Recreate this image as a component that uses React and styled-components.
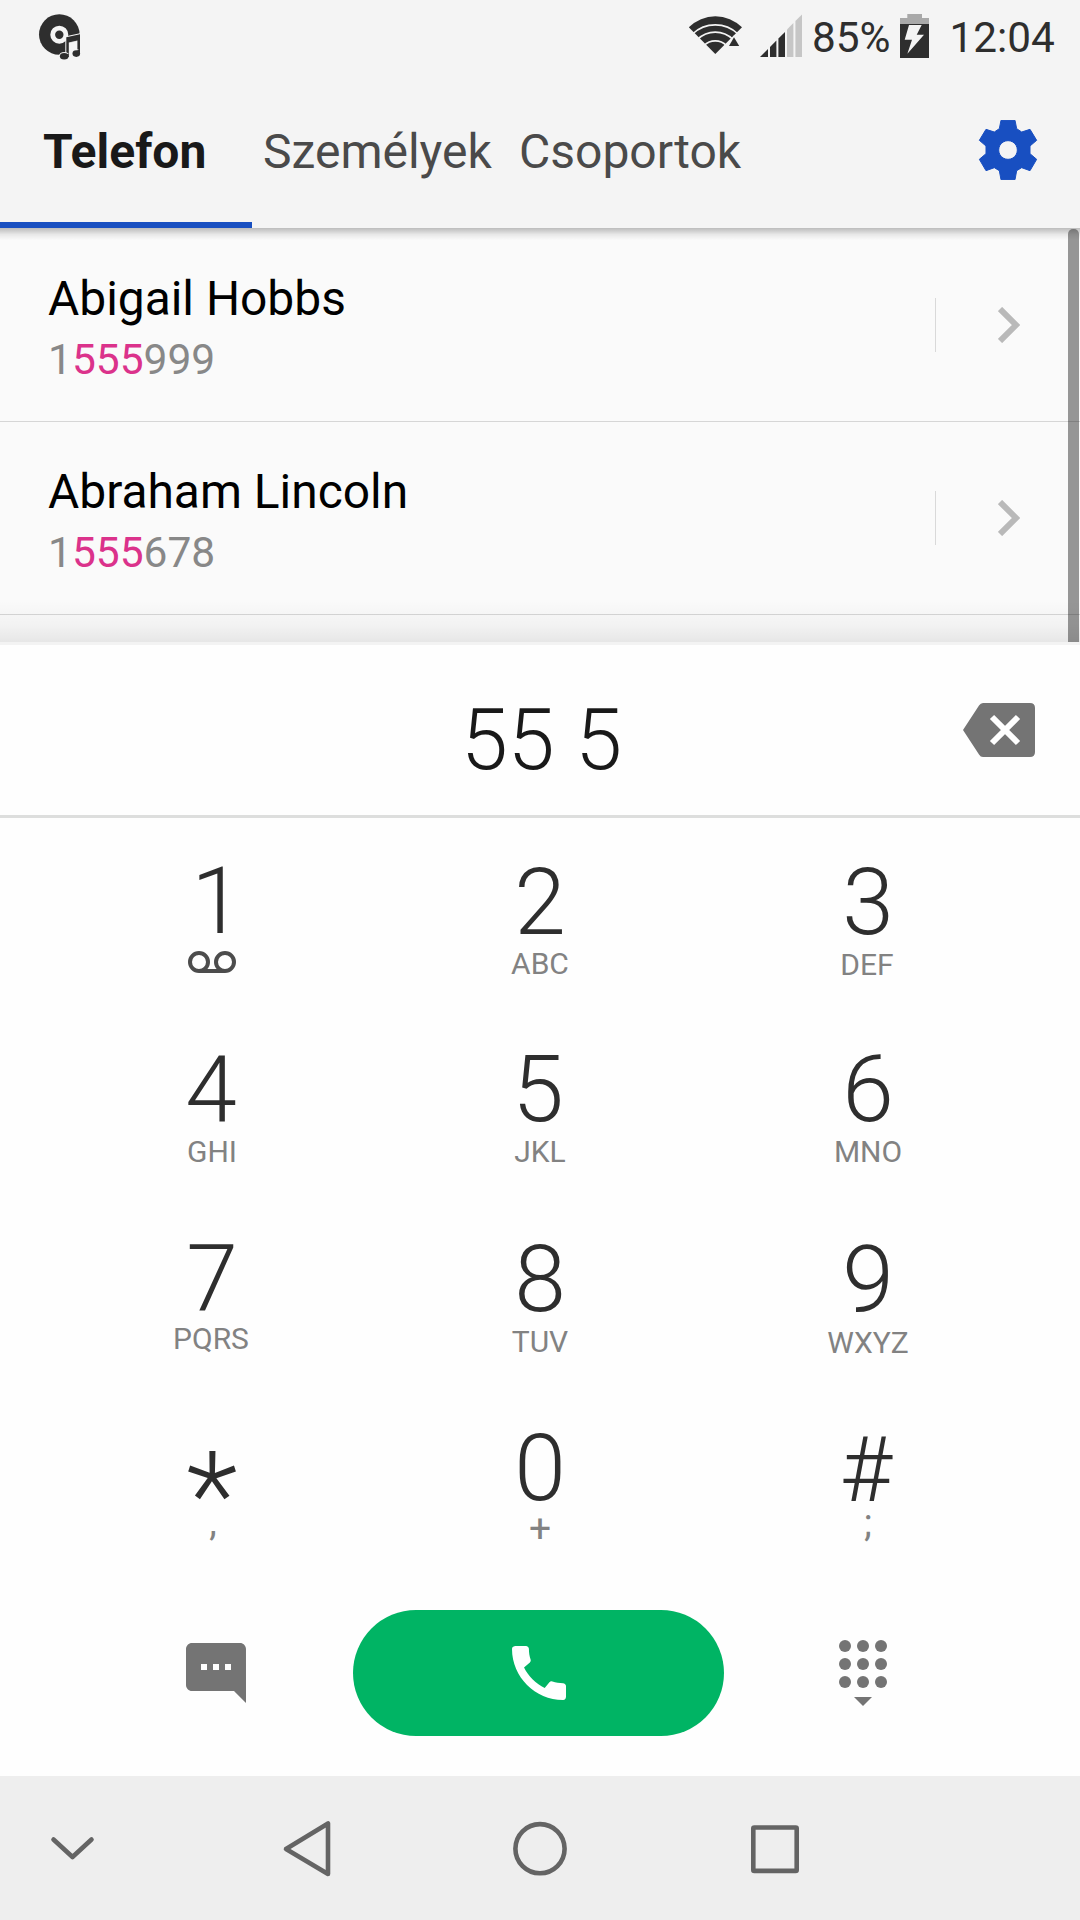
import React from 'react'
import styled, { createGlobalStyle } from 'styled-components'
import { MdCall, MdTextsms } from 'react-icons/md'

const contacts = [
  { name: 'Abigail Hobbs', before: '1', match: '555', after: '999' },
  { name: 'Abraham Lincoln', before: '1', match: '555', after: '678' },
]

// drop / nudge move the digit, lift / slide move the letters under it
const keys = [
  { digit: '1', voicemail: true, drop: 1, nudge: 5 },
  { digit: '2', label: 'ABC', drop: 2 },
  { digit: '3', label: 'DEF', drop: 2, lift: 1, slide: -1 },
  { digit: '4', label: 'GHI', drop: 1, nudge: -1, lift: -1 },
  { digit: '5', label: 'JKL', drop: 0, nudge: -2, lift: -1 },
  { digit: '6', label: 'MNO', drop: 0, lift: -1 },
  { digit: '7', label: 'PQRS', drop: 0, lift: -3, slide: -1 },
  { digit: '8', label: 'TUV', drop: 1 },
  { digit: '9', label: 'WXYZ', drop: 2, lift: 1 },
  { digit: '*', label: ',', symbol: 38, size: 120, drop: 28, lift: -9, slide: 1 },
  { digit: '0', label: '+', symbol: 39, drop: 1, lift: -2 },
  { digit: '#', label: ';', symbol: 38, size: 90, drop: 3, nudge: -2, lift: -8 },
]

function StatusIcons() {
  return (
    <>
      <Wifi viewBox="686 0 60 75">
        <path d="M715.3 54 L688.8 27.3 A37.7 37.7 0 0 1 742 27.3 Z" fill="#2e2e2e" />
        <g fill="none" stroke="#f4f4f4" strokeWidth="1.6">
          <path d="M692.5 34 A33 33 0 0 1 738 34" />
          <path d="M697.5 39.5 A25 25 0 0 1 733 39.5" />
          <path d="M704 45.5 A16 16 0 0 1 726.5 45.5" />
        </g>
        <path d="M734 37.3 L739.2 46 H729 Z" fill="#2e2e2e" stroke="#f4f4f4" strokeWidth="2" paintOrder="stroke" />
      </Wifi>
      <Signal viewBox="760 0 42 75">
        <g fill="#2e2e2e">
          <path d="M760 57 L768 49 V57 Z" />
          <path d="M770 57 V47 L776.4 40.5 V57 Z" />
          <path d="M778.4 57 V38.5 L785 32 V57 Z" />
        </g>
        <g fill="#c6c6c6">
          <path d="M787 57 V29.5 L793.4 23 V57 Z" />
          <path d="M795.4 57 V21 L802 14.5 V57 Z" />
        </g>
      </Signal>
    </>
  )
}

function App() {
  return (
    <Phone>
      <GlobalStyle />
      <StatusBar>
        <Disc viewBox="38 0 44 75">
          <circle cx="59.3" cy="34.5" r="20.3" fill="#2e2e2e" />
          <circle cx="59.3" cy="34.7" r="6.6" fill="none" stroke="#f4f4f4" strokeWidth="4.8" />
          <path d="M68 43 L77 41 V54 H68 Z" fill="#f4f4f4" />
          <g fill="#2e2e2e" stroke="#f4f4f4" strokeWidth="2" paintOrder="stroke">
            <path d="M66.3 37.3 L80 34.3 V54 H77.4 V40.4 L68.8 42.4 V56.5 H66.3 Z" />
            <ellipse cx="64.2" cy="56.2" rx="4.3" ry="3.3" />
            <ellipse cx="76.3" cy="53.6" rx="3.8" ry="3.3" />
          </g>
          <path d="M66.3 54 H68.8 V57 H66.3 Z M77.4 50 H80 V54 H77.4 Z" fill="#2e2e2e" />
        </Disc>
        <StatusIcons />
        <StatusText $left={10}>85%</StatusText>
        <Battery viewBox="900 0 29 75">
          <path d="M907.3 14 H922 V18 H929 V24.5 H900 V18 H907.3 Z" fill="#a9a9a9" />
          <path d="M900 24 H929 V58 H900 Z" fill="#2e2e2e" />
          <path d="M909 25 H921.7 L916.7 34.7 H924 L907.4 53.7 L912 39.7 H904.7 Z" fill="#f4f4f4" />
        </Battery>
        <StatusText $left={21}>12:04</StatusText>
      </StatusBar>

      <TabBar>
        <Tab $active $width={252} $inset={43}>Telefon</Tab>
        <Tab $width={265} $inset={11}>Személyek</Tab>
        <Tab $width={240} $inset={2}>Csoportok</Tab>
        <Gear viewBox="954 420 180 180">
          <path
            transform="translate(0 60)"
            fillRule="evenodd"
            strokeLinejoin="round"
            strokeWidth="3"
            d="M1023 361 H1065 L1070 386 L1085 396 L1110 388 L1130 421 L1110 438 V461 L1130 478 L1110 512 L1085 503 L1070 512 L1065 539 H1023 L1018 512 L1003 503 L978 512 L958 478 L978 461 V438 L958 421 L978 388 L1003 396 L1018 386 Z M1044 422 a28 28 0 1 0 0.1 0 Z"
          />
        </Gear>
      </TabBar>

      <ContactList>
        {contacts.map((contact) => (
          <ContactRow key={contact.name}>
            <ContactText>
              <ContactName>{contact.name}</ContactName>
              <ContactNumber>
                {contact.before}
                <Match>{contact.match}</Match>
                {contact.after}
              </ContactNumber>
            </ContactText>
            <RowDivider />
            <Chevron viewBox="0 0 22 36">
              <path d="M2 2 L18 18 L2 34" fill="none" stroke="#b9b9b9" strokeWidth="6" />
            </Chevron>
          </ContactRow>
        ))}
        <Scrollbar />
        <TopShadow />
        <BottomShadow />
      </ContactList>

      <NumberBar>
        <TypedNumber>55 5</TypedNumber>
        <Backspace viewBox="963 702 72 56">
          <path d="M983 703 H1030 Q1035 703 1035 708 V752 Q1035 757 1030 757 H983 Q980.5 757 979 754.5 L963 730 L979 705.5 Q980.5 703 983 703 Z" fill="#747474" />
          <path d="M992 717 L1018 743 M1018 717 L992 743" stroke="#fff" strokeWidth="6" />
        </Backspace>
      </NumberBar>

      <Keypad>
        {keys.map((key) => (
          <Key key={key.digit}>
            <Digit $size={key.size} $drop={key.drop} $nudge={key.nudge}>{key.digit}</Digit>
            {key.voicemail ? (
              <Voicemail viewBox="0 0 48 22">
                <g fill="none" stroke="#4c4c4c" strokeWidth="4">
                  <circle cx="11" cy="11" r="9" />
                  <circle cx="37" cy="11" r="9" />
                  <path d="M11 20 H37" />
                </g>
              </Voicemail>
            ) : (
              <Letters $size={key.symbol} $lift={key.lift} $slide={key.slide}>{key.label}</Letters>
            )}
          </Key>
        ))}
      </Keypad>

      <Actions>
        <MessageIcon />
        <CallButton>
          <MdCall />
        </CallButton>
        <HidePad viewBox="0 0 48 66">
          {[6, 24, 42].map((y) => [6, 24, 42].map((x) => <circle key={`${x}-${y}`} cx={x} cy={y} r="6" />))}
          <path d="M15 57 H33 L24 66 Z" />
        </HidePad>
      </Actions>

      <NavBar viewBox="0 1776 1080 144">
        <path d="M53.5 1839.5 L72.5 1857 L91.5 1839.5" />
        <path d="M328 1823.5 V1874 L286 1849 Z" />
        <circle cx="540" cy="1848.7" r="24.6" />
        <rect x="753.3" y="1827.5" width="43.4" height="43.4" rx="1" />
      </NavBar>
    </Phone>
  )
}

export default App

const GlobalStyle = createGlobalStyle`
  body {
    margin: 0;
    background: #fff;
  }
  svg {
    display: block;
    flex: none;
  }
`

const Phone = styled.div`
  width: 1080px;
  height: 1920px;
  display: flex;
  flex-direction: column;
  overflow: hidden;
  background: #fefefe;
  font-family: Roboto, sans-serif;
`

const StatusBar = styled.div`
  height: 75px;
  display: flex;
  padding-left: 38px;
  background: #f4f4f4;
`

const Disc = styled.svg`
  width: 44px;
  height: 75px;
  margin-right: 604px;
`

const Wifi = styled.svg`
  width: 60px;
  height: 75px;
  margin-right: 14px;
`

const Signal = styled.svg`
  width: 42px;
  height: 75px;
`

const StatusText = styled.span`
  margin-left: ${(props) => props.$left}px;
  font-size: 42.3px;
  line-height: 75px;
  color: #2e2e2e;
`

const Battery = styled.svg`
  width: 29px;
  height: 75px;
  margin-left: 9px;
`

const TabBar = styled.div`
  height: 153px;
  display: flex;
  background: #f4f4f4;
`

const Tab = styled.div`
  box-sizing: border-box;
  width: ${(props) => props.$width}px;
  padding-left: ${(props) => props.$inset}px;
  font-size: 48px;
  line-height: 153px;
  white-space: nowrap;
  font-weight: ${(props) => (props.$active ? 700 : 400)};
  color: ${(props) => (props.$active ? '#191919' : '#4a4a4a')};
  box-shadow: ${(props) => (props.$active ? 'inset 0 -6px #184fc1' : 'none')};
`

const Gear = styled.svg`
  width: 60px;
  height: 60px;
  margin: 45px 42px 0 auto;
  fill: #184fc1;
  stroke: #184fc1;
`

const ContactList = styled.div`
  position: relative;
  box-sizing: border-box;
  height: 414px;
  padding-top: 1px;
  overflow: hidden;
  background: #fafafa;
`

const ContactRow = styled.div`
  box-sizing: border-box;
  height: 193px;
  display: flex;
  align-items: center;
  padding-left: 48px;
  border-bottom: 1px solid #d6d6d6;
`

const ContactText = styled.div`
  align-self: flex-start;
  width: 887px;
  padding-top: 42px;
`

const ContactName = styled.div`
  font-size: 47.9px;
  line-height: 56px;
  color: #000;
`

const ContactNumber = styled.div`
  margin-top: 9px;
  font-size: 42.5px;
  line-height: 48px;
  color: #888;
`

const Match = styled.span`
  color: #db328b;
`

const RowDivider = styled.div`
  width: 1px;
  height: 54px;
  background: #d9d9d9;
`

const Chevron = styled.svg`
  width: 22px;
  height: 36px;
  margin-left: 62px;
`

const Scrollbar = styled.div`
  position: absolute;
  top: 1px;
  right: 1px;
  bottom: 0;
  width: 11px;
  border-radius: 5px 5px 0 0;
  background: rgba(0, 0, 0, 0.4);
`

const TopShadow = styled.div`
  position: absolute;
  top: 0;
  left: 0;
  right: 0;
  height: 12px;
  background: linear-gradient(rgba(0, 0, 0, 0.25), rgba(0, 0, 0, 0.07) 55%, transparent);
`

const BottomShadow = styled.div`
  position: absolute;
  left: 0;
  right: 0;
  bottom: 0;
  height: 42px;
  background: linear-gradient(transparent, rgba(0, 0, 0, 0.03) 60%, rgba(0, 0, 0, 0.08));
`

const NumberBar = styled.div`
  height: 170px;
  display: flex;
  background: #fefefe;
  border-top: 3px solid #f3f3f3;
  border-bottom: 3px solid #dddedd;
`

const TypedNumber = styled.div`
  width: 963px;
  box-sizing: border-box;
  padding: 48px 0 0 461px;
  font-size: 84.5px;
  font-weight: 300;
  line-height: 96px;
  color: #191919;
`

const Backspace = styled.svg`
  width: 72px;
  height: 56px;
  margin-top: 57px;
`

const Keypad = styled.div`
  display: grid;
  grid-template-columns: repeat(3, 328px);
  grid-auto-rows: 189px;
  padding: 36px 48px 0;
`

const Key = styled.div`
  display: flex;
  flex-direction: column;
  align-items: center;
`

const Digit = styled.div`
  box-sizing: border-box;
  height: 94px;
  padding-top: ${(props) => props.$drop || 0}px;
  margin-left: ${(props) => 2 * (props.$nudge || 0)}px;
  font-size: ${(props) => props.$size || 93}px;
  font-weight: 300;
  line-height: 94px;
  color: #2e2e2e;
`

const Letters = styled.div`
  margin-top: ${(props) => props.$lift || 0}px;
  margin-left: ${(props) => 2 * (props.$slide || 0)}px;
  font-size: ${(props) => props.$size || 30}px;
  line-height: 32px;
  color: #828282;
`

const Voicemail = styled.svg`
  width: 48px;
  height: 22px;
  margin-top: 3px;
`

const Actions = styled.div`
  height: 166px;
  display: flex;
  align-items: flex-start;
`

const MessageIcon = styled(MdTextsms)`
  width: 72px;
  height: 72px;
  margin: 27px 101px 0 180px;
  transform: scaleX(-1);
  color: #747474;
`

const CallButton = styled.button`
  width: 371px;
  height: 126px;
  display: flex;
  align-items: center;
  justify-content: center;
  padding: 0;
  border: none;
  border-radius: 63px;
  background: #00b464;
  color: #fff;
  font-size: 72px;
`

const HidePad = styled.svg`
  width: 48px;
  height: 66px;
  margin: 30px 0 0 115px;
  fill: #747474;
`

const NavBar = styled.svg`
  width: 1080px;
  height: 144px;
  background: #eee;
  fill: none;
  stroke: #646464;
  stroke-width: 4.6;
  stroke-linejoin: round;
  stroke-linecap: round;
  filter: drop-shadow(0 1px 0 rgba(0, 0, 0, 0.15));
`
